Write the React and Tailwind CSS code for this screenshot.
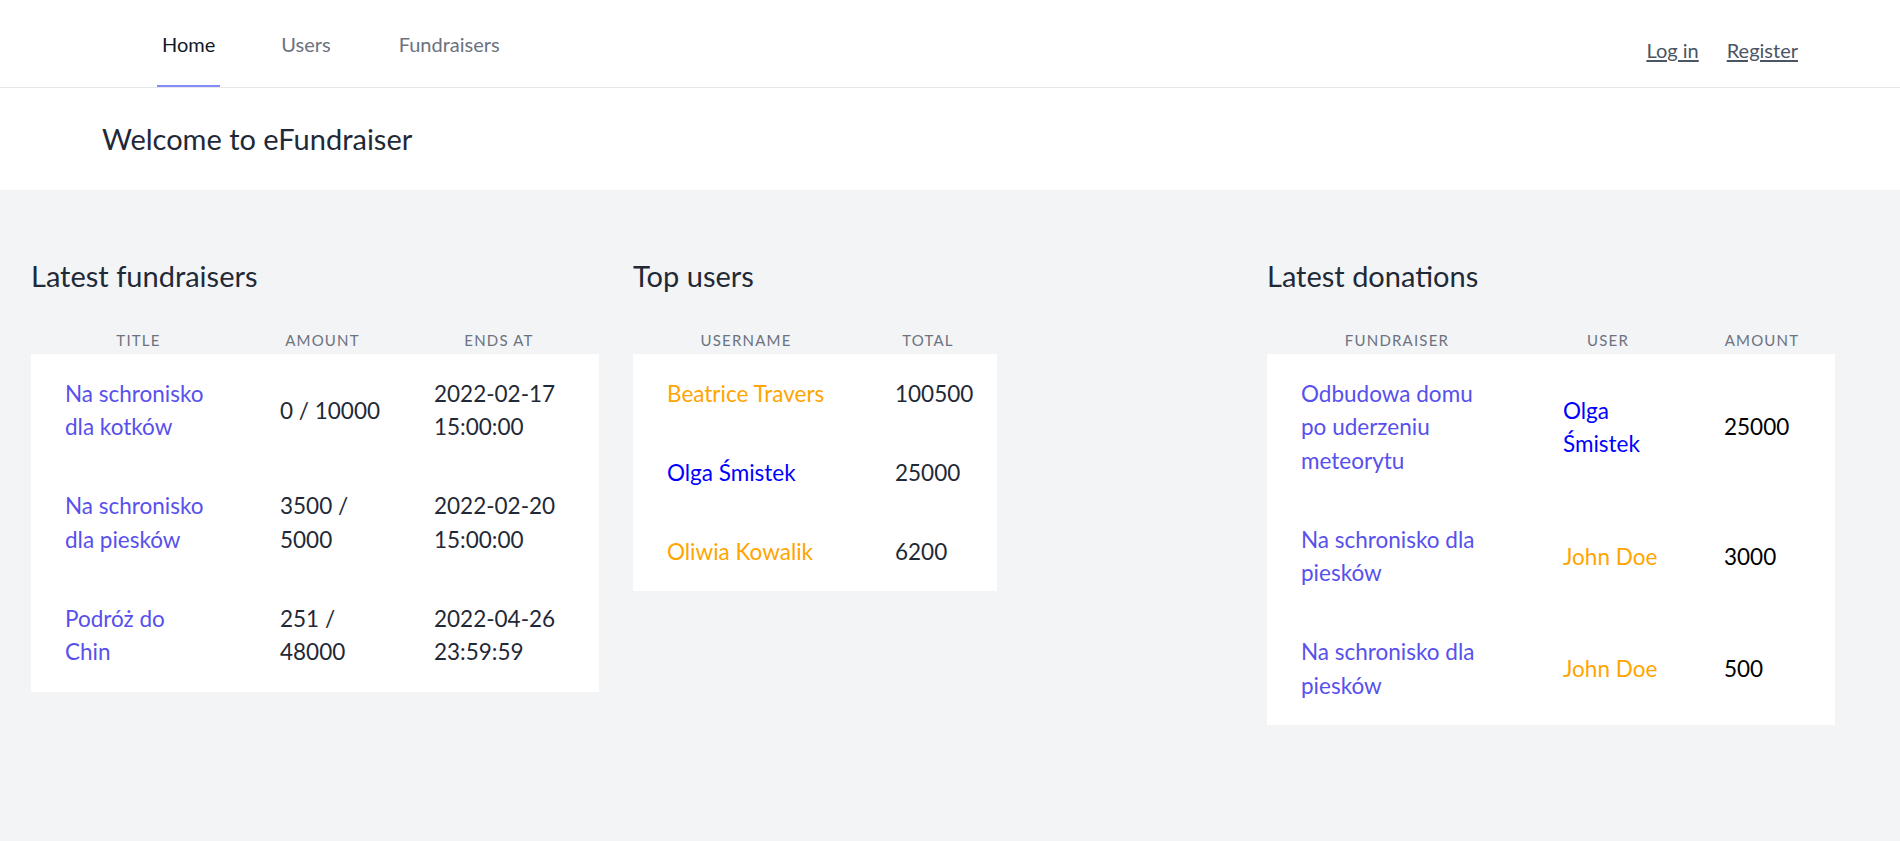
import React from "react";

const font = { fontFamily: "Lato, 'Open Sans', sans-serif" };

const fundraisers = [
  { title: ["Na schronisko", "dla kotków"], amount: ["0 / 10000"], ends: ["2022-02-17", "15:00:00"] },
  { title: ["Na schronisko", "dla piesków"], amount: ["3500 /", "5000"], ends: ["2022-02-20", "15:00:00"] },
  { title: ["Podróż do", "Chin"], amount: ["251 /", "48000"], ends: ["2022-04-26", "23:59:59"] },
];

const users = [
  { name: "Beatrice Travers", color: "text-[#ffa500]", total: "100500" },
  { name: "Olga Śmistek", color: "text-[#0000ff]", total: "25000" },
  { name: "Oliwia Kowalik", color: "text-[#ffa500]", total: "6200" },
];

const donations = [
  { title: ["Odbudowa domu", "po uderzeniu", "meteorytu"], user: ["Olga", "Śmistek"], color: "text-[#0000ff]", amount: "25000" },
  { title: ["Na schronisko dla", "piesków"], user: ["John Doe"], color: "text-[#ffa500]", amount: "3000" },
  { title: ["Na schronisko dla", "piesków"], user: ["John Doe"], color: "text-[#ffa500]", amount: "500" },
];

const Lines = ({ lines }) =>
  lines.map((l, i) => (
    <span key={i} className="block whitespace-nowrap">
      {l}
    </span>
  ));

const Th = ({ children }) => (
  <th className="pb-[4px] text-center text-[15px] leading-[20px] font-normal uppercase tracking-[0.08em] text-[#6b7280]">
    {children}
  </th>
);

const Heading = ({ children }) => (
  <h2 className="text-[29px] leading-[36px] text-[#1f2937] mb-[36px]">{children}</h2>
);

const App = () => {
  return (
    <div className="min-h-screen bg-[#f3f4f6]" style={font}>
      <nav className="bg-white border-b border-[#e5e7eb] flex justify-between h-[88px]">
        <div className="flex h-[87px] pl-[157px]">
          <a className="flex items-center px-[5px] pt-[3px] border-b-2 border-[#818cf8] text-[20px] text-[#111827]">
            Home
          </a>
          <a className="flex items-center px-[5px] pt-[3px] ml-[56px] border-b-2 border-transparent text-[20px] text-[#6b7280]">
            Users
          </a>
          <a className="flex items-center px-[5px] pt-[3px] ml-[58px] border-b-2 border-transparent text-[20px] text-[#6b7280]">
            Fundraisers
          </a>
        </div>
        <div className="flex items-start gap-[28px] pr-[102px] pt-[36px] text-[20px] leading-[28px] text-[#4b5563]">
          <a className="underline underline-offset-2">Log in</a>
          <a className="underline underline-offset-2">Register</a>
        </div>
      </nav>

      <header className="bg-white h-[102px] flex items-center pl-[102px]">
        <h1 className="text-[29px] leading-[36px] text-[#1f2937]">Welcome to eFundraiser</h1>
      </header>

      <main className="grid grid-cols-[602px_634px_568px] pl-[31px] pt-[68px] pb-[100px]">
        <section>
          <Heading>Latest fundraisers</Heading>
          <table className="table-fixed w-[568px]">
            <colgroup>
              <col className="w-[215px]" />
              <col className="w-[153px]" />
              <col className="w-[200px]" />
            </colgroup>
            <thead>
              <tr>
                <Th>Title</Th>
                <Th>Amount</Th>
                <Th>Ends at</Th>
              </tr>
            </thead>
            <tbody className="bg-white text-[22.5px] leading-[33.5px]">
              {fundraisers.map((f, i) => (
                <tr key={i}>
                  <td className="pl-[34px] py-[22.8px] text-[#5850ec]">
                    <Lines lines={f.title} />
                  </td>
                  <td className="pl-[34px] py-[22.8px] text-[#1f2937]">
                    <Lines lines={f.amount} />
                  </td>
                  <td className="pl-[35px] py-[22.8px] text-[#1f2937]">
                    <Lines lines={f.ends} />
                  </td>
                </tr>
              ))}
            </tbody>
          </table>
        </section>

        <section>
          <Heading>Top users</Heading>
          <table className="table-fixed w-[364px]">
            <colgroup>
              <col className="w-[226px]" />
              <col className="w-[138px]" />
            </colgroup>
            <thead>
              <tr>
                <Th>Username</Th>
                <Th>Total</Th>
              </tr>
            </thead>
            <tbody className="bg-white text-[22.5px] leading-[33.5px]">
              {users.map((u, i) => (
                <tr key={i}>
                  <td className={`pl-[34px] py-[22.8px] whitespace-nowrap ${u.color}`}>{u.name}</td>
                  <td className="pl-[36px] py-[22.8px] text-[#1f2937]">{u.total}</td>
                </tr>
              ))}
            </tbody>
          </table>
        </section>

        <section>
          <Heading>Latest donations</Heading>
          <table className="table-fixed w-[568px]">
            <colgroup>
              <col className="w-[260px]" />
              <col className="w-[162px]" />
              <col className="w-[146px]" />
            </colgroup>
            <thead>
              <tr>
                <Th>Fundraiser</Th>
                <Th>User</Th>
                <Th>Amount</Th>
              </tr>
            </thead>
            <tbody className="bg-white text-[22.5px] leading-[33.5px]">
              {donations.map((d, i) => (
                <tr key={i}>
                  <td className="pl-[34px] py-[22.8px] text-[#5850ec]">
                    <Lines lines={d.title} />
                  </td>
                  <td className={`pl-[36px] py-[22.8px] ${d.color}`}>
                    <Lines lines={d.user} />
                  </td>
                  <td className="pl-[35px] py-[22.8px] text-black">{d.amount}</td>
                </tr>
              ))}
            </tbody>
          </table>
        </section>
      </main>
    </div>
  );
};

export default App;
